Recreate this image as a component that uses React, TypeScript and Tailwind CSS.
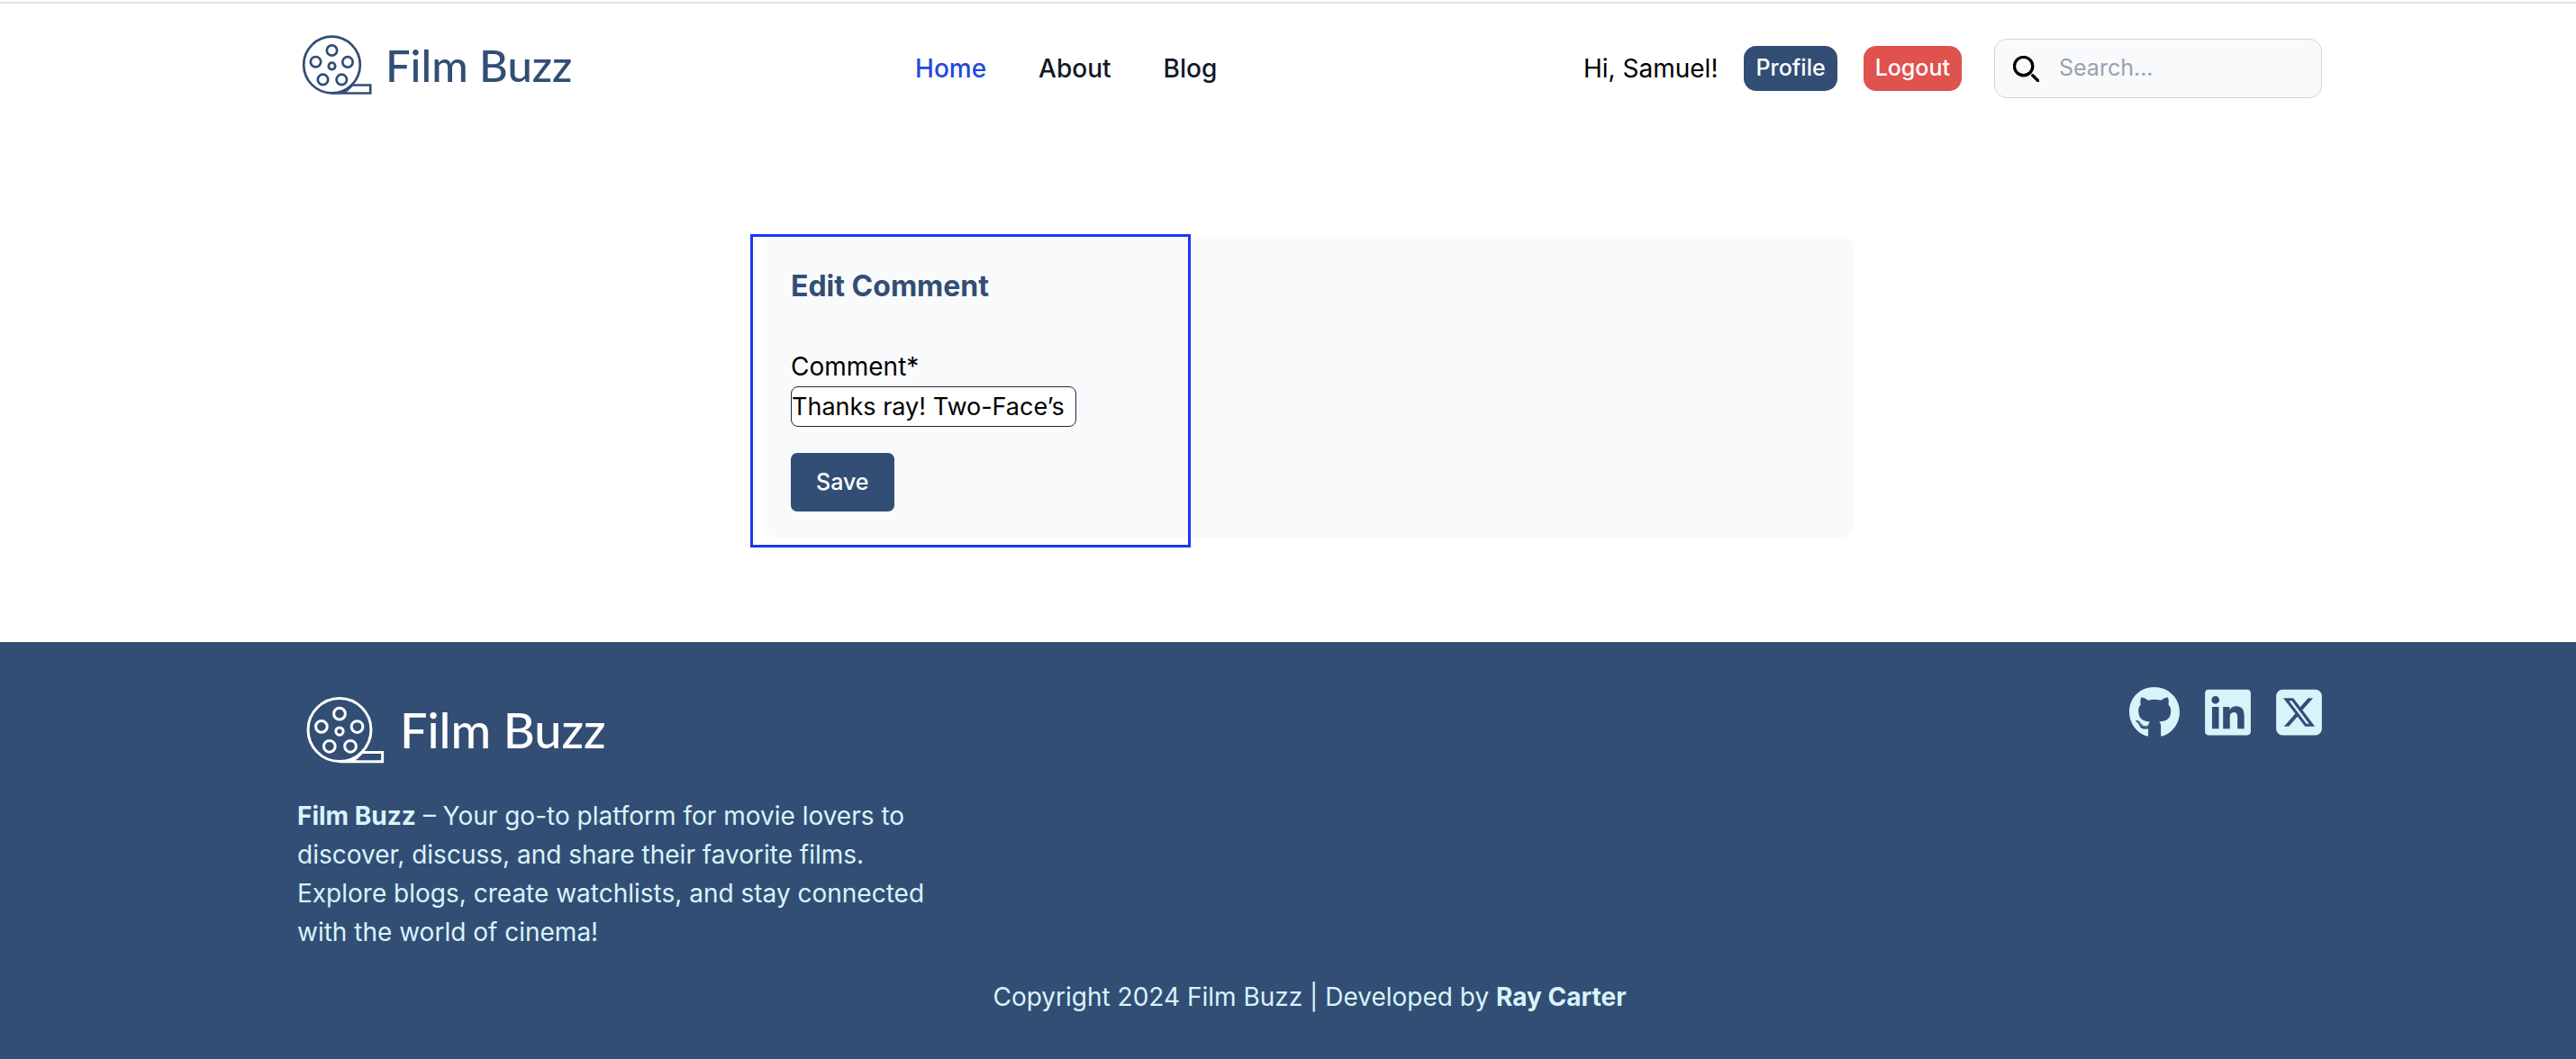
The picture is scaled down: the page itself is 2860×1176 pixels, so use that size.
import React from "react";
import { FaGithub, FaLinkedin, FaSquareXTwitter } from "react-icons/fa6";

function FilmReel({ className }: { className: string }) {
  return (
    <svg
      viewBox="0 0 86 72"
      fill="none"
      stroke="currentColor"
      strokeWidth="2.7"
      className={className}
      aria-hidden="true"
    >
      <circle cx="38.5" cy="36" r="31.3" />
      <circle cx="38.5" cy="20" r="5.7" />
      <circle cx="20.5" cy="32.7" r="5.7" />
      <circle cx="56" cy="32.9" r="5.7" />
      <circle cx="28.5" cy="52.4" r="5.7" />
      <circle cx="49.3" cy="52.4" r="5.7" />
      <circle cx="38.5" cy="37.4" r="3.7" />
      <path d="M60.5 58.5H81.2V67.5H38.5M50 67.5C54.5 65 58 62 61.5 58" />
    </svg>
  );
}

const navLinks = [
  { label: "Home", active: true },
  { label: "About", active: false },
  { label: "Blog", active: false },
];

function Header() {
  return (
    <header className="mx-auto flex w-full max-w-[2296px] items-center justify-between pt-8 pl-12">
      <a href="#" className="flex items-center pb-2 text-[#324e75]">
        <FilmReel className="h-[72px] w-[86px]" />
        <span className="ml-3 font-['Lato'] text-[49px] leading-[72px] font-medium">Film Buzz</span>
      </a>
      <nav>
        <ul className="flex gap-[58px] pr-[26px] text-[28px] leading-[44px] font-medium">
          {navLinks.map((link) => (
            <li key={link.label}>
              <a href="#" className={link.active ? "text-[#2549d8]" : "text-gray-900"}>
                {link.label}
              </a>
            </li>
          ))}
        </ul>
      </nav>
      <div className="flex items-center">
        <span className="mr-[29px] text-[28px] leading-[44px]">Hi, Samuel!</span>
        <button className="mr-[29px] h-[50px] rounded-[14px] bg-[#324e75] px-[13px] text-[25px] font-medium text-white">
          Profile
        </button>
        <button className="mr-9 h-[50px] rounded-[14px] bg-[#df524d] px-[13px] text-[25px] font-medium text-white">
          Logout
        </button>
        <div className="flex h-[66px] w-[364px] items-center rounded-[14px] border border-gray-300 bg-[#f9fafc] pl-5">
          <svg viewBox="0 0 20 20" fill="none" className="h-[29px] w-[29px] shrink-0" aria-hidden="true">
            <path
              d="m19 19-4-4m0-7A7 7 0 1 1 1 8a7 7 0 0 1 14 0Z"
              stroke="black"
              strokeWidth="2.3"
              strokeLinecap="round"
              strokeLinejoin="round"
            />
          </svg>
          <input
            type="text"
            aria-label="Search"
            placeholder="Search..."
            className="ml-[22px] w-full min-w-0 bg-transparent text-[25px] outline-none placeholder:text-gray-400"
          />
        </div>
      </div>
    </header>
  );
}

function EditComment() {
  return (
    <main className="mx-auto w-full max-w-[2296px] pt-[147px] pb-[116px] pl-12">
      <form
        className="relative mx-auto max-w-[1210px] rounded-[14px] bg-[#f9fafc] p-[29px]"
        onSubmit={(e) => e.preventDefault()}
      >
        <h1 className="text-[32px] leading-[52px] font-bold text-[#324e75]">Edit Comment</h1>
        <label htmlFor="comment" className="mt-[41px] block text-[28px] leading-[44px]">
          Comment*
        </label>
        <input
          id="comment"
          type="text"
          defaultValue="Thanks ray! Two-Face’s"
          className="block h-[45px] w-[317px] rounded-lg border border-gray-800 bg-white text-[27px]"
        />
        <button className="mt-[29px] block h-[65px] rounded-[7px] bg-[#324e75] px-7 text-[25px] font-medium text-white">
          Save
        </button>
        <div className="pointer-events-none absolute -top-[3px] -left-4 h-[348px] w-[489px] border-3 border-[#1a38f5]" />
      </form>
    </main>
  );
}

function Footer() {
  return (
    <footer className="grow bg-[#324e75] text-[28px] leading-[43px] text-[#d9f3fa]">
      <div className="mx-auto max-w-[2296px] pt-[49px] pl-12">
        <div className="flex items-start justify-between">
          <div>
            <a href="#" className="mt-2 ml-1 flex items-center text-white">
              <FilmReel className="h-[81px] w-[96px]" />
              <span className="ml-[14px] font-['Lato'] text-[54px] leading-[81px] font-medium">Film Buzz</span>
            </a>
            <p className="mt-[34px] w-[700px]">
              <strong>Film Buzz</strong> – Your go-to platform for movie lovers to discover, discuss, and share their
              favorite films. Explore blogs, create watchlists, and stay connected with the world of cinema!
            </p>
          </div>
          <div className="flex items-center gap-7">
            <a href="#" aria-label="GitHub">
              <FaGithub className="h-[58px] w-[56px]" />
            </a>
            <a href="#" aria-label="LinkedIn">
              <FaLinkedin className="h-[58px] w-[51px]" />
            </a>
            <a href="#" aria-label="X">
              <FaSquareXTwitter className="h-[58px] w-[51px]" />
            </a>
          </div>
        </div>
        <p className="mt-[29px] pb-[46px] text-center">
          Copyright 2024 Film Buzz | Developed by <strong>Ray Carter</strong>
        </p>
      </div>
    </footer>
  );
}

export default function App() {
  return (
    <div className="flex min-h-screen flex-col bg-white pt-[2px] font-['Inter',sans-serif] text-black">
      <div className="h-[2px] bg-[#e2e2e2]" />
      <Header />
      <EditComment />
      <Footer />
    </div>
  );
}
